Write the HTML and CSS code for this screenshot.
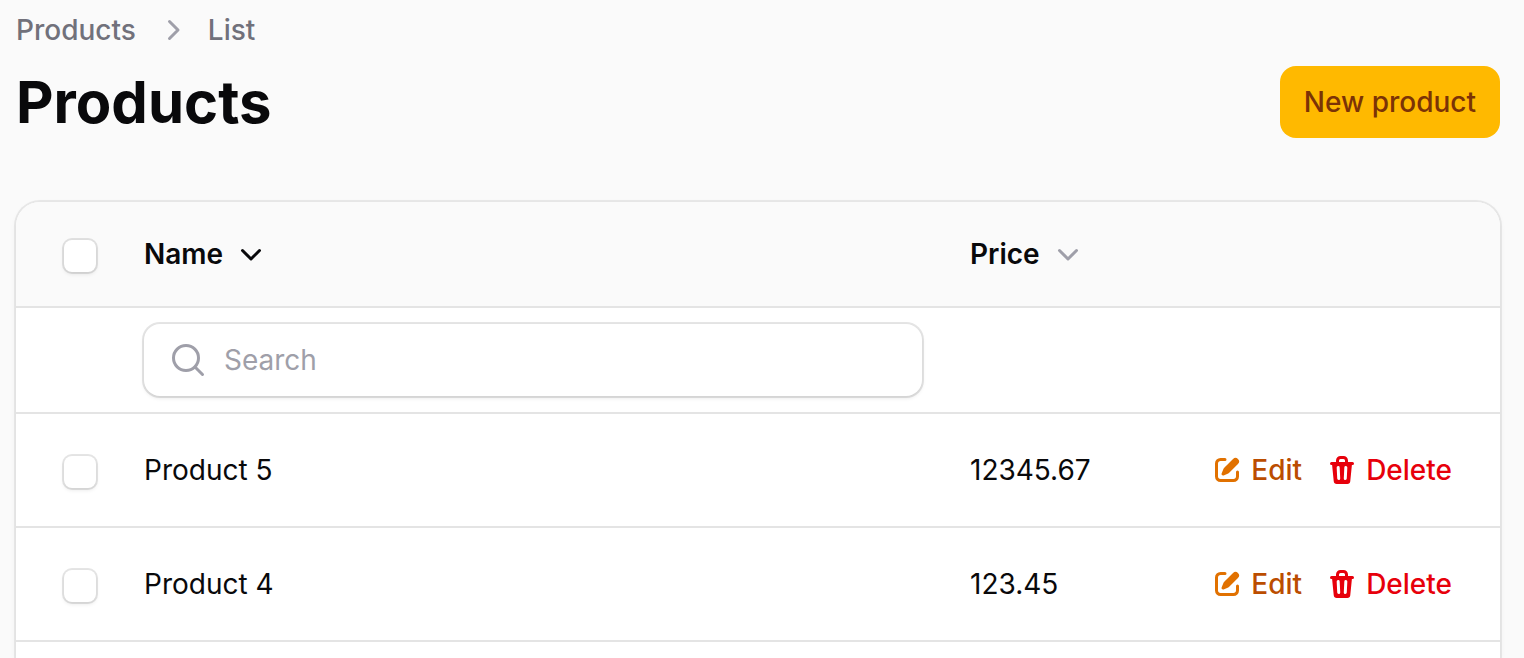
FILE: index.html
```html
<!DOCTYPE html>
<html lang="en">
<head>
<meta charset="utf-8">
<meta name="viewport" content="width=device-width, initial-scale=1">
<title>Products</title>
<link rel="stylesheet" href="styles.css">
</head>
<body>
<svg class="sprite" aria-hidden="true">
  <symbol id="chevron-down" viewBox="0 0 20 20"><path d="M5.75 8.25 10 12.5 14.25 8.25" fill="none" stroke="currentColor" stroke-width="1.5" stroke-linecap="round" stroke-linejoin="round"/></symbol>
  <symbol id="chevron-right" viewBox="0 0 20 20"><path d="M8.75 5.75 13 10 8.75 14.25" fill="none" stroke="currentColor" stroke-width="1.5" stroke-linecap="round" stroke-linejoin="round"/></symbol>
  <symbol id="search" viewBox="0 0 20 20"><path d="M15.25 9a6.25 6.25 0 1 1-12.5 0a6.25 6.25 0 0 1 12.5 0ZM13.5 13.5 17.25 17.25" fill="none" stroke="currentColor" stroke-width="1.5" stroke-linecap="round"/></symbol>
  <symbol id="edit" viewBox="0 0 16 16"><path fill="currentColor" d="M13.488 2.513a1.75 1.75 0 0 0-2.475 0L6.75 6.774a2.75 2.75 0 0 0-.596.892l-.848 2.047a.75.75 0 0 0 .98.98l2.047-.848a2.75 2.75 0 0 0 .892-.596l4.261-4.262a1.75 1.75 0 0 0 0-2.474Z"/><path fill="currentColor" d="M4.75 3.5c-.69 0-1.25.56-1.25 1.25v6.5c0 .69.56 1.25 1.25 1.25h6.5c.69 0 1.25-.56 1.25-1.25V9A.75.75 0 0 1 14 9v2.25A2.75 2.75 0 0 1 11.25 14h-6.5A2.75 2.75 0 0 1 2 11.25v-6.5A2.75 2.75 0 0 1 4.75 2H7a.75.75 0 0 1 0 1.5H4.75Z"/></symbol>
  <symbol id="trash" viewBox="0 0 16 16"><path fill="currentColor" fill-rule="evenodd" d="M5 3.25V4H2.75a.75.75 0 0 0 0 1.5h.3l.815 8.15A1.5 1.5 0 0 0 5.357 15h5.285a1.5 1.5 0 0 0 1.493-1.35l.815-8.15h.3a.75.75 0 0 0 0-1.5H11v-.75A2.25 2.25 0 0 0 8.75 1h-1.5A2.25 2.25 0 0 0 5 3.25Zm2.25-.75a.75.75 0 0 0-.75.75V4h3v-.75a.75.75 0 0 0-.75-.75h-1.5ZM6.05 6a.75.75 0 0 1 .787.713l.275 5.5a.75.75 0 0 1-1.498.075l-.275-5.5A.75.75 0 0 1 6.05 6Zm3.9 0a.75.75 0 0 1 .712.787l-.275 5.5a.75.75 0 0 1-1.498-.075l.275-5.5a.75.75 0 0 1 .786-.711Z"/></symbol>
</svg>
<main class="page">
  <header class="header">
    <nav class="breadcrumbs" aria-label="Breadcrumb">
      <a href="#">Products</a>
      <svg class="icon" aria-hidden="true"><use href="#chevron-right"/></svg>
      <a href="#">List</a>
    </nav>
    <div class="heading-row">
      <h1 class="heading">Products</h1>
      <button class="btn-primary" type="button">New product</button>
    </div>
  </header>
  <section class="card">
    <table class="table">
      <colgroup><col class="col-select"><col><col class="col-price"><col class="col-actions"></colgroup>
      <thead>
        <tr>
          <th><input class="checkbox" type="checkbox" aria-label="Select all"></th>
          <th><button class="sort" type="button">Name <svg class="icon" aria-hidden="true"><use href="#chevron-down"/></svg></button></th>
          <th><button class="sort sort-idle" type="button">Price <svg class="icon" aria-hidden="true"><use href="#chevron-down"/></svg></button></th>
          <th></th>
        </tr>
      </thead>
      <tbody>
        <tr class="filter-row">
          <td></td>
          <td><label class="search"><svg class="icon" aria-hidden="true"><use href="#search"/></svg><input class="search-input" type="text" placeholder="Search" aria-label="Search by name"></label></td>
          <td></td>
          <td></td>
        </tr>
        <tr>
          <td><input class="checkbox" type="checkbox" aria-label="Select Product 5"></td>
          <td>Product 5</td>
          <td>12345.67</td>
          <td><div class="actions">
            <a class="action edit" href="#"><svg class="icon-sm" aria-hidden="true"><use href="#edit"/></svg><span>Edit</span></a>
            <button class="action delete" type="button"><svg class="icon-sm" aria-hidden="true"><use href="#trash"/></svg><span>Delete</span></button>
          </div></td>
        </tr>
        <tr>
          <td><input class="checkbox" type="checkbox" aria-label="Select Product 4"></td>
          <td>Product 4</td>
          <td>123.45</td>
          <td><div class="actions">
            <a class="action edit" href="#"><svg class="icon-sm" aria-hidden="true"><use href="#edit"/></svg><span>Edit</span></a>
            <button class="action delete" type="button"><svg class="icon-sm" aria-hidden="true"><use href="#trash"/></svg><span>Delete</span></button>
          </div></td>
        </tr>
      </tbody>
    </table>
  </section>
</main>
</body>
</html>
```
FILE: styles.css
```css
*, *::before, *::after { box-sizing: border-box; }

body {
  margin: 0;
  background: #fafafa;
  color: #09090b;
  font: 400 28px/40px Inter, "Liberation Sans", sans-serif;
}

a { color: inherit; text-decoration: none; }

button {
  border: 0;
  padding: 0;
  background: none;
  color: inherit;
  font: inherit;
  cursor: pointer;
}

.sprite { display: none; }
.icon { width: 40px; height: 40px; flex: none; color: #9f9fa9; }
.icon-sm { width: 32px; height: 32px; flex: none; }

.page {
  display: flex;
  flex-direction: column;
  height: 100vh;
  overflow: hidden;
  padding: 10px 24px 0 16px;
}

.header { margin-bottom: 64px; }

.breadcrumbs {
  display: flex;
  align-items: center;
  gap: 16px;
  color: #71717b;
  font-weight: 500;
}

.heading-row {
  display: flex;
  align-items: center;
  justify-content: space-between;
  margin-top: 16px;
}

.heading { margin: 0; font-size: 58px; line-height: 72px; font-weight: 700; }

.btn-primary {
  padding: 16px 24px;
  border-radius: 16px;
  background: #ffb900;
  color: #7b3306;
  font-weight: 500;
}

.card {
  flex: 1;
  border-radius: 24px 24px 0 0;
  background: #fff;
  box-shadow: 0 0 0 2px rgba(9, 9, 11, .07), 0 2px 6px rgba(0, 0, 0, .06);
}

.table { width: 100%; border-collapse: separate; border-spacing: 0; table-layout: fixed; }
.col-select { width: 104px; }
.col-price { width: 246px; }
.col-actions { width: 308px; }

.table th, .table td {
  height: 114px;
  padding: 0 24px;
  border-bottom: 2px solid #e4e4e4;
  text-align: left;
  vertical-align: middle;
}

.table th { height: 106px; background: #fafafa; }
.table th:first-child { border-top-left-radius: 24px; }
.table th:last-child { border-top-right-radius: 24px; }
.table .filter-row td { height: 106px; }
.table th:first-child, .table td:first-child { padding: 0 0 0 48px; }
.table td:last-child { padding: 0 48px 0 0; }

.checkbox {
  display: block;
  appearance: none;
  width: 32px;
  height: 32px;
  margin: 4px 0 0;
  border-radius: 8px;
  background: #fff;
  box-shadow: 0 0 0 2px rgba(9, 9, 11, .1), 0 2px 4px rgba(0, 0, 0, .1);
}
.checkbox:checked { background: #e17100; }

.sort { display: flex; align-items: center; gap: 8px; font-weight: 600; }
.sort .icon { color: #09090b; }
.sort-idle .icon { color: #9f9fa9; }

.search {
  display: flex;
  align-items: center;
  gap: 16px;
  padding: 0 24px;
  border-radius: 16px;
  background: #fff;
  box-shadow: 0 0 0 2px rgba(9, 9, 11, .1), 0 2px 4px rgba(0, 0, 0, .1);
}

.search-input {
  flex: 1;
  min-width: 0;
  height: 72px;
  padding: 0;
  border: 0;
  outline: 0;
  background: transparent;
  color: inherit;
  font: inherit;
}
.search-input::placeholder { color: #9f9fa9; opacity: 1; }

.actions { display: flex; justify-content: flex-end; gap: 24px; }
.action { display: flex; align-items: center; gap: 8px; font-weight: 500; }
.edit { color: #bb4d00; }
.edit .icon-sm { color: #e17100; }
.delete { color: #e7000b; }
```
